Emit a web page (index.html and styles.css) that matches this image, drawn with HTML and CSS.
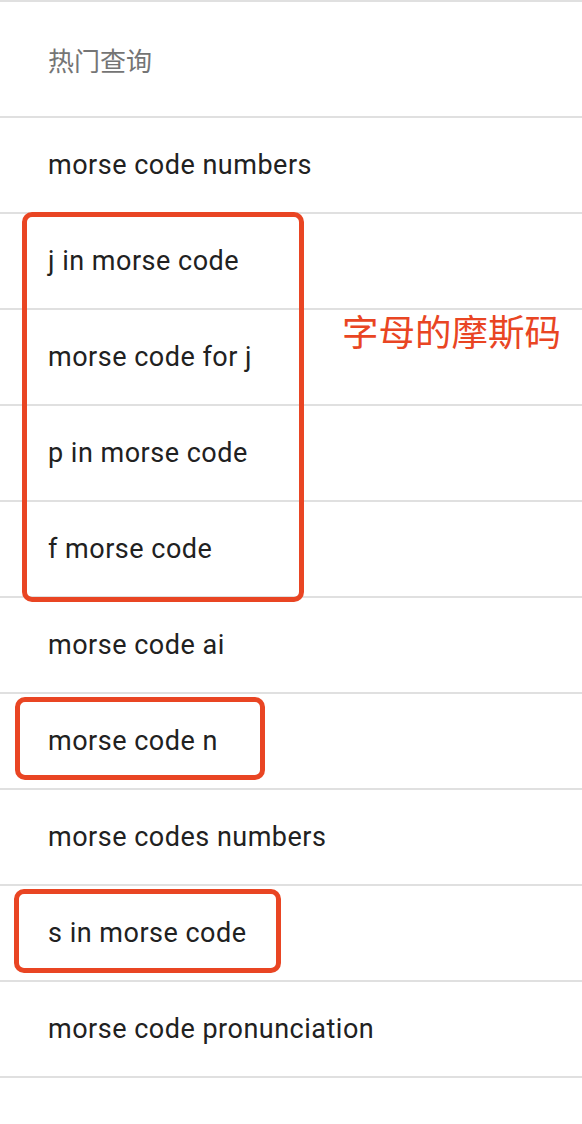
FILE: index.html
```html
<!DOCTYPE html>
<html lang="zh">
<head>
<meta charset="utf-8">
<title>热门查询</title>
<link rel="stylesheet" href="styles.css">
</head>
<body>
<div class="page">
  <ul class="list">
    <li class="row head">热门查询</li>
    <li class="row">morse code numbers</li>
    <li class="row">j in morse code</li>
    <li class="row">morse code for j</li>
    <li class="row">p in morse code</li>
    <li class="row">f morse code</li>
    <li class="row">morse code ai</li>
    <li class="row">morse code n</li>
    <li class="row">morse codes numbers</li>
    <li class="row">s in morse code</li>
    <li class="row">morse code pronunciation</li>
  </ul>
  <div class="mark mark-a"></div>
  <div class="mark mark-b"></div>
  <div class="mark mark-c"></div>
  <div class="note">字母的摩斯码</div>
</div>
</body>
</html>
```
FILE: styles.css
```css
html, body {
  margin: 0;
  padding: 0;
  background: #ffffff;
}
.page {
  position: relative;
  width: 582px;
  height: 1124px;
  overflow: hidden;
  font-family: Roboto, "Noto Sans CJK SC", sans-serif;
}
.list {
  list-style: none;
  margin: 0;
  padding: 0;
  border-top: 2px solid #e0e0e0;
}
.row {
  display: flex;
  align-items: center;
  height: 94px;
  padding-left: 48px;
  border-bottom: 2px solid #e0e0e0;
  font-size: 27px;
  letter-spacing: 0.5px;
  color: #212121;
}
.row.head {
  height: 114px;
  color: #757575;
  font-family: "Noto Sans CJK SC", sans-serif;
  font-size: 26px;
  letter-spacing: 0;
}
.mark {
  position: absolute;
  border: 5px solid #e94523;
  border-radius: 10px;
  box-sizing: border-box;
}
.mark-a { left: 22px; top: 212px; width: 282px; height: 390px; }
.mark-b { left: 15px; top: 697px; width: 250px; height: 83px; }
.mark-c { left: 14px; top: 889px; width: 267px; height: 84px; }
.note {
  position: absolute;
  left: 342px;
  top: 308px;
  font-family: "Noto Sans CJK SC", sans-serif;
  font-size: 36.5px;
  line-height: 46px;
  color: #e94523;
}
```
